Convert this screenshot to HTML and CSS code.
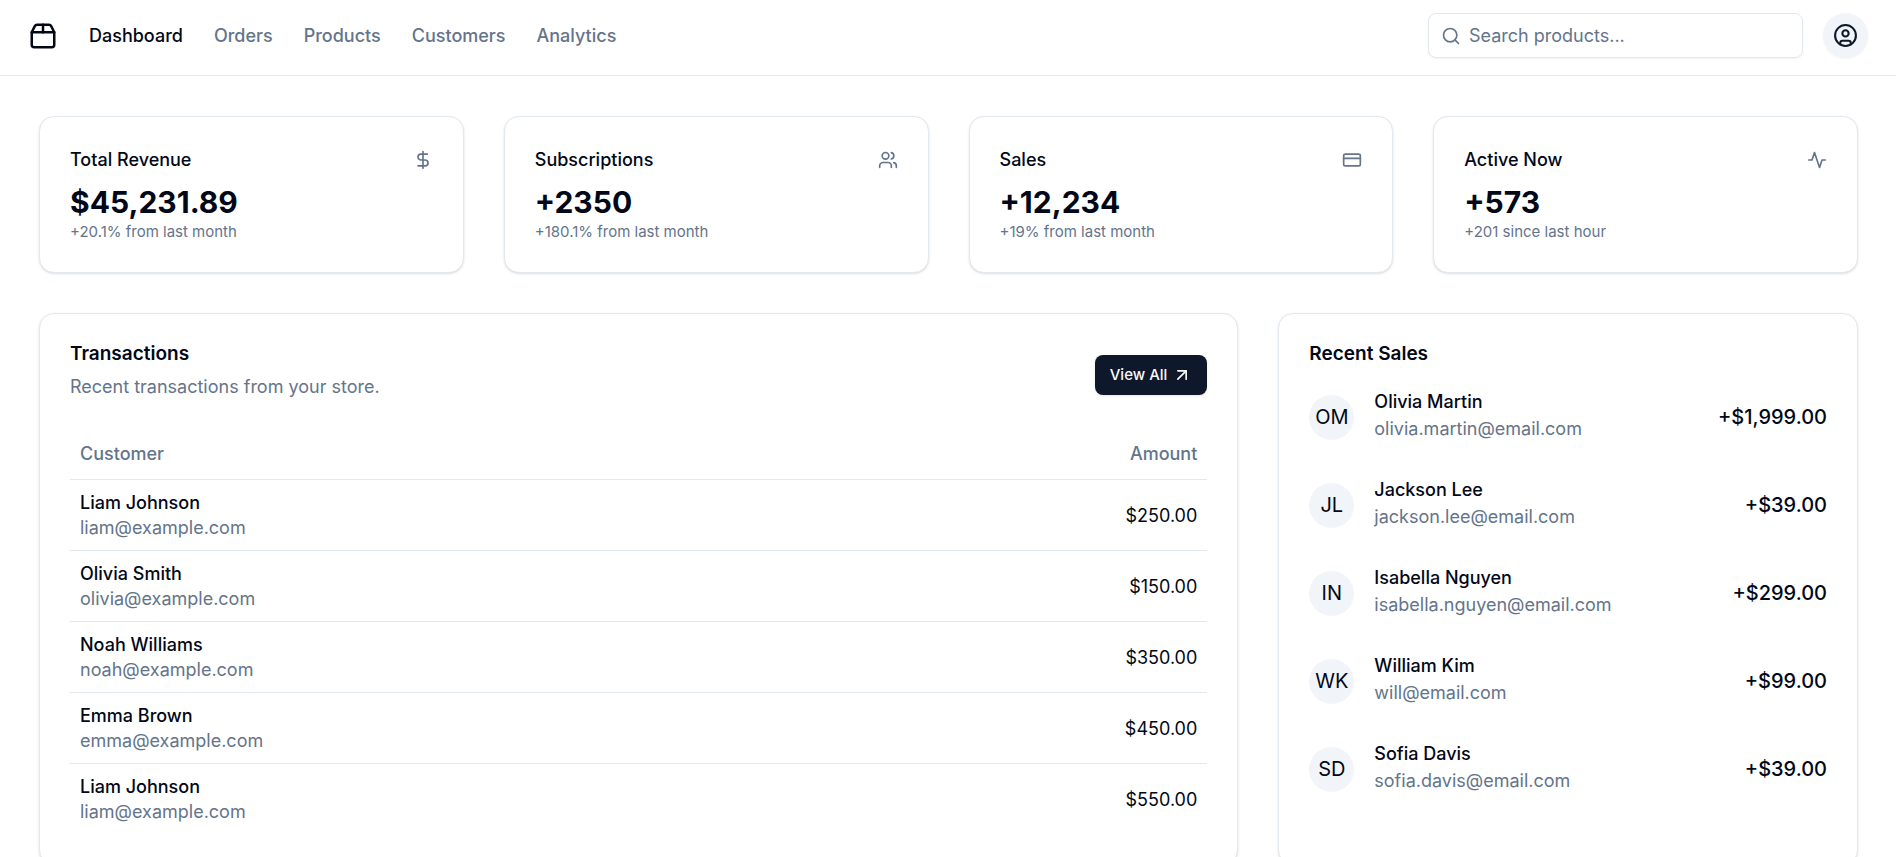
FILE: index.html
```html
<!DOCTYPE html>
<html lang="en">
<head>
<meta charset="utf-8">
<meta name="viewport" content="width=device-width, initial-scale=1">
<title>Dashboard</title>
<link rel="stylesheet" href="styles.css">
</head>
<body>
<header class="topbar">
  <nav class="nav" aria-label="Main">
    <a class="nav-logo" href="#" aria-label="Home">
      <svg class="icon icon-lg" viewBox="0 0 24 24" aria-hidden="true"><path d="M3 9h18v10a2 2 0 0 1-2 2H5a2 2 0 0 1-2-2V9Z"/><path d="m3 9 2.45-4.9A2 2 0 0 1 7.24 3h9.52a2 2 0 0 1 1.8 1.1L21 9"/><path d="M12 3v6"/></svg>
    </a>
    <a class="nav-link nav-link-active" href="#">Dashboard</a>
    <a class="nav-link" href="#">Orders</a>
    <a class="nav-link" href="#">Products</a>
    <a class="nav-link" href="#">Customers</a>
    <a class="nav-link" href="#">Analytics</a>
  </nav>
  <div class="tools">
    <form class="search" role="search">
      <svg class="icon icon-sm muted" viewBox="0 0 24 24" aria-hidden="true"><circle cx="11" cy="11" r="8"/><path d="m21 21-4.3-4.3"/></svg>
      <input class="search-input" type="search" placeholder="Search products..." aria-label="Search products">
    </form>
    <button class="account" type="button" aria-label="Account">
      <svg class="icon icon-md" viewBox="0 0 24 24" aria-hidden="true"><circle cx="12" cy="12" r="10"/><circle cx="12" cy="10" r="3"/><path d="M7 20.662V19a2 2 0 0 1 2-2h6a2 2 0 0 1 2 2v1.662"/></svg>
    </button>
  </div>
</header>

<main class="main">
  <section class="stats" aria-label="Summary">
    <article class="card">
      <div class="stat-head"><h2 class="stat-title">Total Revenue</h2>
        <svg class="icon icon-sm muted" viewBox="0 0 24 24" aria-hidden="true"><path d="M12 2v20"/><path d="M17 5H9.5a3.5 3.5 0 0 0 0 7h5a3.5 3.5 0 0 1 0 7H6"/></svg></div>
      <p class="stat-value">$45,231.89</p>
      <p class="stat-note">+20.1% from last month</p>
    </article>
    <article class="card">
      <div class="stat-head"><h2 class="stat-title">Subscriptions</h2>
        <svg class="icon icon-sm muted" viewBox="0 0 24 24" aria-hidden="true"><path d="M16 21v-2a4 4 0 0 0-4-4H6a4 4 0 0 0-4 4v2"/><circle cx="9" cy="7" r="4"/><path d="M22 21v-2a4 4 0 0 0-3-3.87"/><path d="M16 3.13a4 4 0 0 1 0 7.75"/></svg></div>
      <p class="stat-value">+2350</p>
      <p class="stat-note">+180.1% from last month</p>
    </article>
    <article class="card">
      <div class="stat-head"><h2 class="stat-title">Sales</h2>
        <svg class="icon icon-sm muted" viewBox="0 0 24 24" aria-hidden="true"><rect width="20" height="14" x="2" y="5" rx="2"/><path d="M2 10h20"/></svg></div>
      <p class="stat-value">+12,234</p>
      <p class="stat-note">+19% from last month</p>
    </article>
    <article class="card">
      <div class="stat-head"><h2 class="stat-title">Active Now</h2>
        <svg class="icon icon-sm muted" viewBox="0 0 24 24" aria-hidden="true"><path d="M22 12h-4l-3 9L9 3l-3 9H2"/></svg></div>
      <p class="stat-value">+573</p>
      <p class="stat-note">+201 since last hour</p>
    </article>
  </section>

  <div class="panels">
    <section class="card card-wide">
      <div class="panel-head">
        <div class="panel-titles">
          <h2 class="panel-title">Transactions</h2>
          <p class="panel-note">Recent transactions from your store.</p>
        </div>
        <a class="view-all" href="#">View All
          <svg class="icon icon-sm" viewBox="0 0 24 24" aria-hidden="true"><path d="M7 7h10v10"/><path d="M7 17 17 7"/></svg>
        </a>
      </div>
      <table class="table">
        <thead><tr><th scope="col">Customer</th><th scope="col" class="amount">Amount</th></tr></thead>
        <tbody>
          <tr><td><div class="name">Liam Johnson</div><div class="email">liam@example.com</div></td><td class="amount">$250.00</td></tr>
          <tr><td><div class="name">Olivia Smith</div><div class="email">olivia@example.com</div></td><td class="amount">$150.00</td></tr>
          <tr><td><div class="name">Noah Williams</div><div class="email">noah@example.com</div></td><td class="amount">$350.00</td></tr>
          <tr><td><div class="name">Emma Brown</div><div class="email">emma@example.com</div></td><td class="amount">$450.00</td></tr>
          <tr><td><div class="name">Liam Johnson</div><div class="email">liam@example.com</div></td><td class="amount">$550.00</td></tr>
        </tbody>
      </table>
    </section>

    <section class="card">
      <h2 class="panel-title">Recent Sales</h2>
      <ul class="sales">
        <li class="sale"><span class="avatar">OM</span><div class="sale-who"><p class="sale-name">Olivia Martin</p><p class="email">olivia.martin@email.com</p></div><span class="sale-amount">+$1,999.00</span></li>
        <li class="sale"><span class="avatar">JL</span><div class="sale-who"><p class="sale-name">Jackson Lee</p><p class="email">jackson.lee@email.com</p></div><span class="sale-amount">+$39.00</span></li>
        <li class="sale"><span class="avatar">IN</span><div class="sale-who"><p class="sale-name">Isabella Nguyen</p><p class="email">isabella.nguyen@email.com</p></div><span class="sale-amount">+$299.00</span></li>
        <li class="sale"><span class="avatar">WK</span><div class="sale-who"><p class="sale-name">William Kim</p><p class="email">will@email.com</p></div><span class="sale-amount">+$99.00</span></li>
        <li class="sale"><span class="avatar">SD</span><div class="sale-who"><p class="sale-name">Sofia Davis</p><p class="email">sofia.davis@email.com</p></div><span class="sale-amount">+$39.00</span></li>
      </ul>
    </section>
  </div>
</main>
</body>
</html>
```
FILE: styles.css
```css
:root {
  --ink: #020817;
  --muted: #64748b;
  --line: #e2e8f0;
  --soft: #f1f5f9;
  --primary: #0f172a;
}

*,
*::before,
*::after {
  box-sizing: border-box;
}

body {
  margin: 0;
  background: #fff;
  color: var(--ink);
  font-family: Inter, "Liberation Sans", sans-serif;
  font-size: 18px;
  line-height: 25px;
}

h2,
p,
ul {
  margin: 0;
  padding: 0;
}

ul {
  list-style: none;
}

a {
  color: inherit;
  text-decoration: none;
}

.icon {
  display: block;
  flex: none;
  fill: none;
  stroke: currentColor;
  stroke-width: 2;
  stroke-linecap: round;
  stroke-linejoin: round;
}

.icon-sm {
  width: 20px;
  height: 20px;
}

.icon-md {
  width: 25px;
  height: 25px;
}

.icon-lg {
  width: 30px;
  height: 30px;
}

.muted {
  color: var(--muted);
}

/* Top bar */
.topbar {
  display: flex;
  align-items: center;
  justify-content: space-between;
  gap: 20px;
  padding: 13px 28px 17px;
  border-bottom: 1px solid var(--line);
}

.nav {
  display: flex;
  align-items: center;
  gap: 31px;
}

.nav-link {
  color: var(--muted);
  font-weight: 500;
}

.nav-link-active {
  color: var(--ink);
}

.tools {
  display: flex;
  align-items: center;
  gap: 20px;
}

.search {
  display: flex;
  align-items: center;
  gap: 8px;
  width: 375px;
  height: 45px;
  padding: 0 12px;
  border: 1px solid var(--line);
  border-radius: 8px;
  box-shadow: 0 1px 2px rgba(0, 0, 0, 0.05);
}

.search-input {
  flex: 1;
  min-width: 0;
  padding: 0;
  border: 0;
  outline: 0;
  background: none;
  color: var(--ink);
  font: inherit;
}

.search-input::placeholder {
  color: var(--muted);
  opacity: 1;
}

.account {
  display: grid;
  place-items: center;
  width: 45px;
  height: 45px;
  padding: 0;
  border: 0;
  border-radius: 50%;
  background: var(--soft);
  color: var(--primary);
  box-shadow: 0 1px 2px rgba(0, 0, 0, 0.05);
}

/* Cards */
.main {
  display: grid;
  gap: 40px;
  padding: 40px 38px 40px 39px;
}

.card {
  min-width: 0;
  padding: 30px;
  border: 1px solid var(--line);
  border-radius: 15px;
  background: #fff;
  box-shadow: 0 1px 3px rgba(0, 0, 0, 0.1), 0 1px 2px -1px rgba(0, 0, 0, 0.1);
}

.stats {
  display: grid;
  grid-template-columns: repeat(4, minmax(0, 1fr));
  gap: 40px;
}

.stat-head {
  display: flex;
  align-items: center;
  justify-content: space-between;
  margin-bottom: 10px;
}

.stat-title {
  font-size: 18px;
  font-weight: 500;
}

.stat-value {
  font-size: 30px;
  font-weight: 700;
  line-height: 40px;
}

.stat-note {
  color: var(--muted);
  font-size: 15px;
  line-height: 20px;
}

/* Panels */
.panels {
  display: grid;
  grid-template-columns: repeat(3, minmax(0, 1fr));
  gap: 40px;
}

.card-wide {
  grid-column: span 2;
}

.panel-head {
  display: flex;
  align-items: center;
  justify-content: space-between;
  margin-bottom: 30px;
}

.panel-titles {
  display: grid;
  gap: 10px;
}

.panel-title {
  font-size: 19px;
  font-weight: 600;
  line-height: 20px;
}

.panel-note,
.email {
  color: var(--muted);
}

.view-all {
  display: flex;
  align-items: center;
  gap: 5px;
  height: 40px;
  margin-top: 6px;
  padding: 0 15px;
  border-radius: 8px;
  background: var(--primary);
  color: #f8fafc;
  font-size: 15px;
  font-weight: 500;
  box-shadow: 0 1px 3px rgba(0, 0, 0, 0.1);
}

.table {
  width: 100%;
  border-collapse: separate;
  border-spacing: 0;
}

.table th {
  height: 51px;
  padding: 0 10px 2px;
  border-bottom: 1px solid var(--line);
  color: var(--muted);
  font-weight: 500;
  text-align: left;
}

.table td {
  padding: 10px;
  border-bottom: 1px solid var(--line);
}

.table tbody tr:last-child td {
  border-bottom: 0;
}

.table .amount {
  text-align: right;
}

.name {
  font-weight: 500;
}

.sales {
  display: grid;
  gap: 40px;
  margin-top: 29px;
}

.sale {
  display: flex;
  align-items: center;
  gap: 20px;
}

.avatar {
  display: grid;
  place-items: center;
  flex: none;
  width: 45px;
  height: 45px;
  border-radius: 50%;
  background: var(--soft);
  font-size: 20px;
}

.sale-who {
  display: grid;
  gap: 5px;
  min-width: 0;
}

.sale-name {
  font-weight: 500;
  line-height: 18px;
}

.sale-amount {
  margin-left: auto;
  font-size: 20px;
  font-weight: 500;
}
```
